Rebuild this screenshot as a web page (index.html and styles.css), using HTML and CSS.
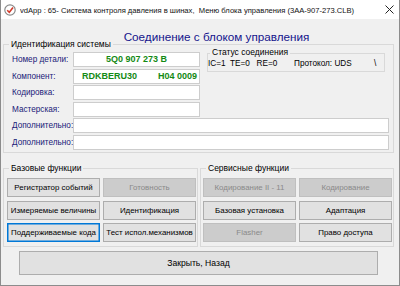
FILE: index.html
```html
<!DOCTYPE html>
<html>
<head>
<meta charset="utf-8">
<link rel="stylesheet" href="styles.css">
</head>
<body>
<div class="window">
  <div class="titlebar">
    <svg class="app-icon" width="12" height="12" viewBox="0 0 12 12">
      <circle cx="6" cy="6" r="5.2" fill="#fff" stroke="#8a8a8a" stroke-width="1.2"/>
      <path d="M3.2 6.2 L5.3 8.3 L9 3.6" fill="none" stroke="#d23a2a" stroke-width="1.6"/>
    </svg>
    <span class="title">vdApp : 65- Система контроля давления в шинах,&nbsp; Меню блока управления (3AA-907-273.CLB)</span>
    <svg class="close-x" width="9" height="9" viewBox="0 0 9 9">
      <path d="M0.5 0.5 L8.5 8.5 M8.5 0.5 L0.5 8.5" stroke="#222" stroke-width="1"/>
    </svg>
  </div>
  <div class="client">
    <div class="header">Соединение с блоком управления</div>
    <div class="group ident">
      <span class="group-title">Идентификация системы</span>
      <div class="ident-grid">
        <span class="label">Номер детали:</span>
        <div class="field value center">5Q0 907 273 B</div>
        <div class="status">
          <span class="group-title status-title">Статус соединения</span>
          <span class="st1">IC=1&nbsp; TE=0&nbsp;&nbsp; RE=0</span>
          <span class="st2">Протокол: UDS</span>
          <span class="st3">\</span>
        </div>
        <span class="label">Компонент:</span>
        <div class="field value">RDKBERU30<span class="sp"></span>H04 0009</div>
        <span class="label">Кодировка:</span>
        <div class="field"></div>
        <span class="label">Мастерская:</span>
        <div class="field"></div>
        <span class="label">Дополнительно:</span>
        <div class="field wide"></div>
        <span class="label">Дополнительно:</span>
        <div class="field wide"></div>
      </div>
    </div>
    <div class="func-row">
      <div class="group funcs">
        <span class="group-title">Базовые функции</span>
        <div class="btn-grid">
          <div class="btn">Регистратор событий</div>
          <div class="btn disabled">Готовность</div>
          <div class="btn">Измеряемые величины</div>
          <div class="btn">Идентификация</div>
          <div class="btn focused">Поддерживаемые кода</div>
          <div class="btn">Тест испол.механизмов</div>
        </div>
      </div>
      <div class="group funcs service">
        <span class="group-title">Сервисные функции</span>
        <div class="btn-grid">
          <div class="btn disabled">Кодирование II - 11</div>
          <div class="btn disabled">Кодирование</div>
          <div class="btn">Базовая установка</div>
          <div class="btn">Адаптация</div>
          <div class="btn disabled">Flasher</div>
          <div class="btn">Право доступа</div>
        </div>
      </div>
    </div>
    <div class="btn close-btn">Закрыть, Назад</div>
  </div>
</div>
</body>
</html>
```
FILE: styles.css
```css
* { box-sizing: border-box; }
html, body { margin: 0; padding: 0; background: #f0f0f0; }
body { font-family: "Liberation Sans", Arial, sans-serif; font-size: 9px; color: #000; }

.window {
  width: 400px;
  height: 286px;
  border: 1px solid #8c8c8c;
  border-top: none;
  background: #f0f0f0;
  display: flex;
  flex-direction: column;
}

.titlebar {
  height: 19px;
  flex: none;
  background: #fff;
  display: flex;
  align-items: center;
  padding-left: 3px;
  padding-right: 5px;
}
.app-icon { flex: none; margin-right: 4px; margin-top: 1px; }
.title {
  font-family: "Liberation Sans", Arial, sans-serif;
  font-size: 7.6px;
  color: #111;
  white-space: nowrap;
  flex: 1;
  margin-top: 1px;
  overflow: hidden;
}
.close-x { flex: none; }

.client {
  flex: 1;
  padding: 0 5px 0 2px;
  display: flex;
  flex-direction: column;
}

.header {
  height: 25px;
  padding-top: 11px;
  padding-left: 36px;
  line-height: 14px;
  text-align: center;
  font-size: 11.7px;
  color: #14148c;
}

.group {
  position: relative;
  border: 1px solid #d9d9d9;
}
.group-title {
  position: absolute;
  top: -6px;
  left: 5px;
  padding: 0 2px;
  line-height: 11px;
  background: #f0f0f0;
  white-space: nowrap;
  font-size: 8.5px;
}

.ident {
  height: 109px;
  padding: 7px 5px 0 8px;
}
.ident-grid {
  display: grid;
  grid-template-columns: 61px 127px 188px;
  grid-template-rows: repeat(6, 15px);
  row-gap: 1.5px;
}
.label {
  grid-column: 1;
  color: #202078;
  line-height: 15px;
  white-space: nowrap;
  font-size: 8.2px;
}
.field {
  grid-column: 2;
  background: #fff;
  border: 1px solid #cdcdcd;
}
.field.wide { grid-column: 2 / 4; margin-right: -1px; }
.value {
  color: #148a14;
  font-weight: bold;
  font-size: 9px;
  line-height: 13px;
  padding-left: 8px;
  white-space: nowrap;
}
.value.center { text-align: center; padding-left: 0; }
.sp { display: inline-block; width: 21px; }

.status {
  grid-column: 3;
  grid-row: 1 / 3;
  align-self: start;
  position: relative;
  margin: 1px 3px 0 7px;
  height: 19px;
  border: 1px solid #d9d9d9;
  display: flex;
  align-items: center;
  padding-top: 2px;
  padding-left: 0;
  font-size: 8.2px;
  white-space: nowrap;
}
.status-title { left: 2px; top: -7px; font-size: 8.5px; }
.st1 { width: 86px; }
.st2 { width: 80px; }

.func-row {
  display: flex;
  gap: 2px;
  margin-top: 15px;
}
.funcs {
  width: 195px;
  height: 79px;
  padding: 9px 1px 0 3px;
}
.service { padding-left: 2px; }
.btn-grid {
  display: grid;
  grid-template-columns: 93px 93px;
  grid-template-rows: repeat(3, 19px);
  column-gap: 3px;
  row-gap: 3.5px;
}
.btn {
  background: #e1e1e1;
  border: 1px solid #adadad;
  display: flex;
  align-items: center;
  justify-content: center;
  white-space: nowrap;
  font-size: 7.9px;
  color: #000;
}
.btn.disabled {
  background: #cccccc;
  border-color: #bfbfbf;
  color: #8a8a8a;
}
.btn.focused {
  border-color: #0078d7;
  box-shadow: inset 0 0 0 0.5px #0078d7;
}
.close-btn {
  margin: 4px auto 0;
  width: 359px;
  height: 24px;
  font-size: 8.6px;
}
```
